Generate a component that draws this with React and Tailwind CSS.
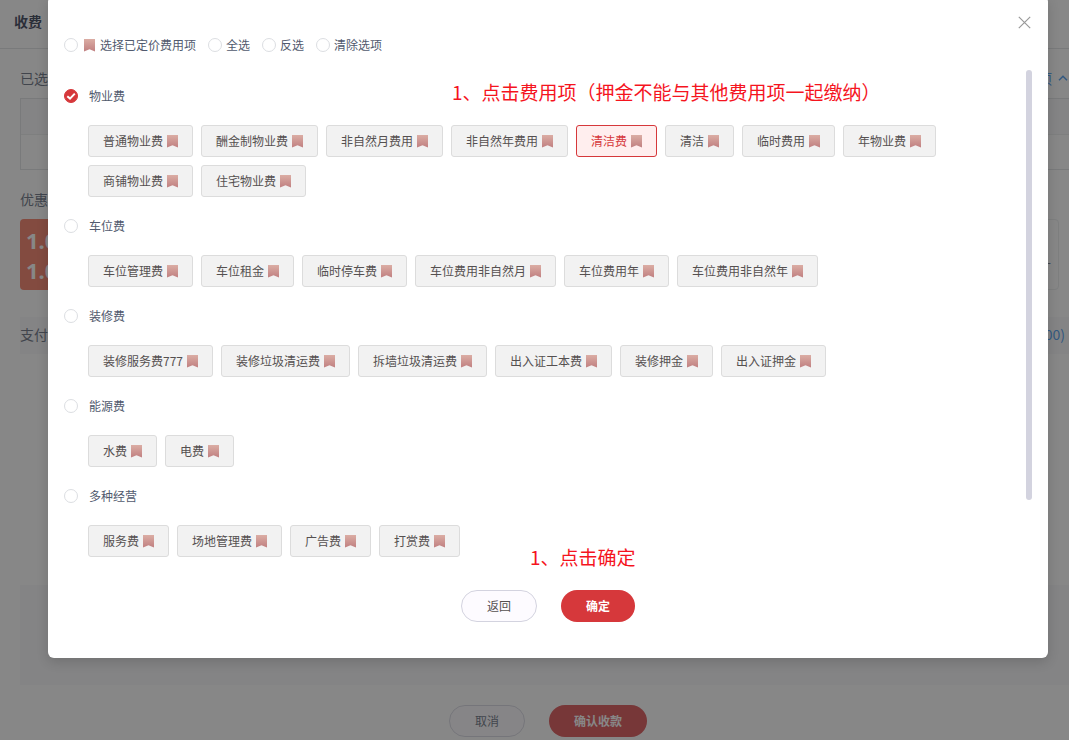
import React, { useState } from "react";

const groups = [
  {
    name: "物业费",
    items: [
      "普通物业费",
      "酬金制物业费",
      "非自然月费用",
      "非自然年费用",
      "清洁费",
      "清洁",
      "临时费用",
      "年物业费",
      "商铺物业费",
      "住宅物业费",
    ],
  },
  {
    name: "车位费",
    items: ["车位管理费", "车位租金", "临时停车费", "车位费用非自然月", "车位费用年", "车位费用非自然年"],
  },
  {
    name: "装修费",
    items: ["装修服务费777", "装修垃圾清运费", "拆墙垃圾清运费", "出入证工本费", "装修押金", "出入证押金"],
  },
  { name: "能源费", items: ["水费", "电费"] },
  { name: "多种经营", items: ["服务费", "场地管理费", "广告费", "打赏费"] },
];

const Flag = () => (
  <svg width="11" height="13" viewBox="0 0 11 13" className="shrink-0" aria-hidden="true">
    <defs>
      <linearGradient id="flag" x1="0" y1="0" x2="0" y2="1">
        <stop offset="0" stopColor="#dbada4" />
        <stop offset="1" stopColor="#c07f80" />
      </linearGradient>
    </defs>
    <path d="M0 0H11V12.6L5.5 10.2L0 12.6Z" fill="url(#flag)" />
  </svg>
);

const Tick = ({ type, name, checked, onChange }) => (
  <span className="relative flex h-3.5 w-3.5 shrink-0">
    <input
      type={type}
      name={name}
      checked={checked}
      onChange={onChange}
      className="peer h-3.5 w-3.5 appearance-none rounded-full border border-[#dcdee2] bg-white checked:border-[#d6383b] checked:bg-[#d6383b]"
    />
    <svg
      viewBox="0 0 14 14"
      className="pointer-events-none absolute inset-0 hidden h-3.5 w-3.5 peer-checked:block"
      fill="none"
      stroke="#fff"
      strokeWidth="2"
    >
      <path d="M3.3 7.2L6 9.6L10.8 4.6" />
    </svg>
  </span>
);

const PayPage = () => (
  <div className="text-sm text-[#515a6e]">
    <div className="flex h-[49px] items-center border-b border-[#dcdee2] px-3.5 pb-1.5 font-bold text-[#17233d]">
      收费
    </div>
    <div className="px-5 pt-[19px]">
      <div className="flex h-5 items-center justify-between pr-2">
        <span>已选</span>
        <a href="#fee" className="flex items-center gap-1.5 text-[#2d8cf0]">
          费用项
          <svg width="10" height="6" viewBox="0 0 10 6" fill="none" stroke="currentColor" strokeWidth="1.5">
            <path d="M1 5.2L5 1.2L9 5.2" />
          </svg>
        </a>
      </div>
      <div className="mt-2.5 border border-[#dcdee2]">
        <div className="h-9 border-b border-[#e8eaec] bg-[#f8f8f9]"></div>
        <div className="h-[34px]"></div>
      </div>
      <div className="mt-[19px] h-5">优惠</div>
      <div className="mt-2.5 flex h-[71px] gap-4 pr-[17px]">
        <div className="w-48 rounded-sm bg-[#f5694f] px-1.5 pt-1.5 font-['Noto_Sans',sans-serif] text-[22px] leading-[30px] font-bold text-white">
          <div>1.0</div>
          <div>1.0</div>
        </div>
        <div className="flex flex-1 items-center justify-end rounded-sm border border-[#e8eaec] px-[7px] pt-3">
          —
        </div>
      </div>
      <div className="mt-[27px] flex h-[37px] items-center justify-between bg-[#f8f8f9] pr-[11px] pb-1">
        <span>支付</span>
        <span className="text-[#2d8cf0]">(0.00)</span>
      </div>
      <div className="mt-[231px] h-[100px] bg-[#f8f8f9]"></div>
      <div className="mt-5 flex justify-center gap-6 text-xs">
        <button className="h-8 rounded-full border border-[#d3d3df] bg-[#fdfbff] px-[25px]">取消</button>
        <button className="h-8 rounded-full bg-[#d6383b] px-[25px] font-bold text-white">确认收款</button>
      </div>
    </div>
  </div>
);

const FeeModal = () => {
  const [mode, setMode] = useState("");
  const [checkedGroups, setCheckedGroups] = useState(["物业费"]);
  const [picked, setPicked] = useState(["清洁费"]);

  const toggle = (list, setList, value) => {
    setList(list.includes(value) ? list.filter((i) => i !== value) : [...list, value]);
  };

  return (
    <div
      role="dialog"
      aria-label="选择费用项"
      className="relative mx-12 -mt-1 rounded-md bg-white px-4 pt-[38px] pb-9 text-xs text-[#515a6e] shadow-[0_4px_12px_rgba(0,0,0,0.15)]"
    >
      <button aria-label="关闭" className="absolute top-5 right-[17px]">
        <svg width="13" height="13" viewBox="0 0 13 13" fill="none" stroke="#999" strokeWidth="1.2">
          <path d="M0.8 0.8L12.2 12.2M12.2 0.8L0.8 12.2" />
        </svg>
      </button>

      <div className="flex h-[22px] items-center gap-3">
        {["选择已定价费用项", "全选", "反选", "清除选项"].map((text, index) => (
          <label key={text} className="flex items-center gap-1">
            <Tick type="radio" name="mode" checked={mode === text} onChange={() => setMode(text)} />
            {index === 0 ? (
              <span className="flex items-center gap-[5px] pl-0.5">
                <Flag />
                {text}
              </span>
            ) : (
              text
            )}
          </label>
        ))}
      </div>

      <div className="mt-[14px] flex h-[500px]">
        <div className="flex flex-1 flex-col gap-[19px] pt-4">
          {groups.map((group) => (
            <div key={group.name}>
              <label className="flex h-5 w-fit items-center gap-[11px]">
                <Tick
                  type="checkbox"
                  name={group.name}
                  checked={checkedGroups.includes(group.name)}
                  onChange={() => toggle(checkedGroups, setCheckedGroups, group.name)}
                />
                {group.name}
              </label>
              <div className="mt-[19px] ml-6 flex flex-wrap gap-2">
                {group.items.map((item) => (
                  <button
                    key={item}
                    aria-pressed={picked.includes(item)}
                    onClick={() => toggle(picked, setPicked, item)}
                    className={
                      picked.includes(item)
                        ? "flex h-8 items-center gap-1 rounded-[3px] border border-[#d6383b] bg-[#ffeeee] px-3.5 text-[#d6383b]"
                        : "flex h-8 items-center gap-1 rounded-[3px] border border-[#dcdcdc] bg-[#f2f2f2] px-3.5 text-[#555050]"
                    }
                  >
                    {item}
                    <Flag />
                  </button>
                ))}
              </div>
            </div>
          ))}
        </div>
        <div className="w-1.5">
          <div className="h-[86%] rounded-full bg-[#d3d3df]"></div>
        </div>
      </div>

      <div className="mt-5 flex justify-center gap-6">
        <button className="h-8 rounded-full border border-[#d3d3df] bg-[#fdfbff] px-[25px] text-[#555050]">
          返回
        </button>
        <button className="h-8 rounded-full bg-[#d6383b] px-[25px] font-bold text-white">确定</button>
      </div>

      {/* step notes pinned over the dialog */}
      <p className="absolute top-[82px] left-[404px] text-[19px] leading-7 text-[#f5141e]">
        1、点击费用项（押金不能与其他费用项一起缴纳）
      </p>
      <p className="absolute top-[547px] left-[482px] text-[19px] leading-7 text-[#f5141e]">
        1、点击确定
      </p>
    </div>
  );
};

const App = () => {
  return (
    <div className="h-screen overflow-hidden bg-white font-['Noto_Sans_CJK_SC',sans-serif]">
      <div className="relative h-full w-[calc(100%+27px)]">
        <PayPage />
        <div className="absolute inset-0 flow-root bg-[rgba(55,55,55,0.6)]">
          <FeeModal />
        </div>
      </div>
    </div>
  );
};

export default App;
